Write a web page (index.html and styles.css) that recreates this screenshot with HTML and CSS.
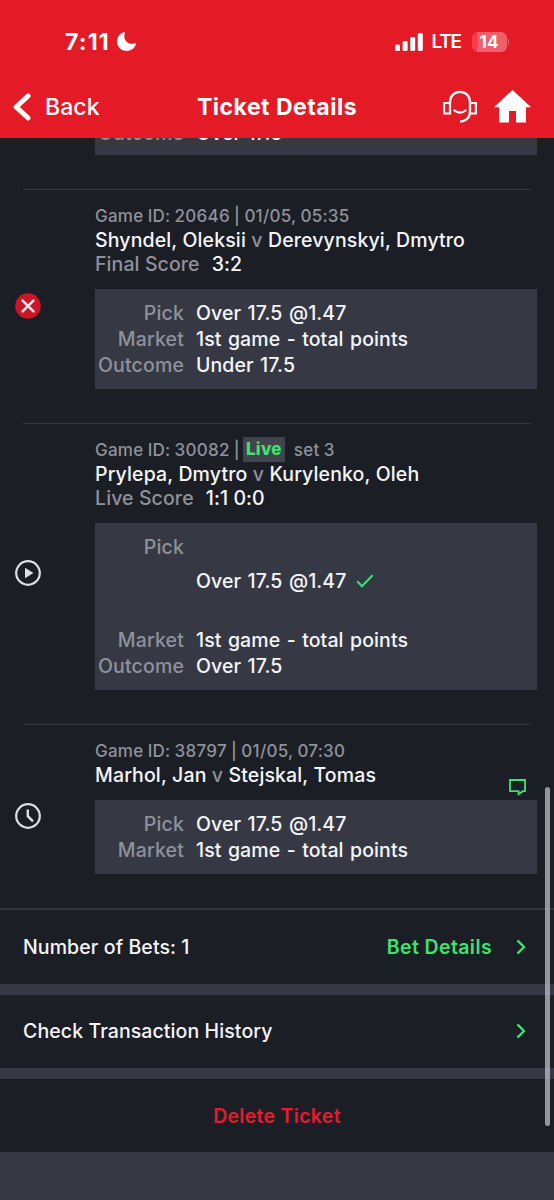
FILE: index.html
```html
<!DOCTYPE html>
<html lang="en">
<head>
  <meta charset="UTF-8">
  <meta name="viewport" content="width=device-width, initial-scale=1.0">
  <title>Ticket Details</title>
  <link rel="stylesheet" href="styles.css">
</head>
<body>
  <header class="header">
    <div class="status-bar">
      <div class="status-time">
        <span class="clock">7:11</span>
        <svg width="19" height="19" viewBox="0 0 19 19">
          <path d="M6.4 0.3C7.4 -0.2 8.2 0.5 7.8 1.5C5.6 7.4 11 13.6 17.4 11.4C18.5 11 19.3 11.7 18.8 12.8C17.2 16.6 13.8 19 9.7 19C4.3 19 0 14.8 0 9.5C0 5.4 2.5 1.8 6.4 0.3Z" fill="#fff"/>
        </svg>
      </div>
      <div class="status-right">
        <svg width="28" height="18" viewBox="0 0 28 18" fill="#fff">
          <rect x="0" y="11.5" width="5" height="6.5" rx="1.5"/>
          <rect x="7.6" y="8" width="5" height="10" rx="1.5"/>
          <rect x="15.2" y="4" width="5" height="14" rx="1.5"/>
          <rect x="22.8" y="0" width="5" height="18" rx="1.5"/>
        </svg>
        <span class="network">LTE</span>
        <span class="battery">14</span>
        <span class="battery-cap"></span>
      </div>
    </div>
    <nav class="nav-bar">
      <a class="back">
        <svg width="18" height="28" viewBox="0 0 18 28">
          <path d="M15 3L3.2 14L15 25" fill="none" stroke="#fff" stroke-width="5" stroke-linecap="round" stroke-linejoin="round"/>
        </svg>
        <span class="back-label">Back</span>
      </a>
      <h1>Ticket Details</h1>
      <div class="nav-icons">
        <svg width="34" height="34" viewBox="0 0 34 34" fill="none" stroke="#fff" stroke-width="2.2">
          <path d="M7 13H1.1V23.5H7Z"/>
          <path d="M27 13H32.9V23.5H27Z"/>
          <path d="M7 13V12C7 6 11.5 1.8 17 1.8S27 6 27 12V21.5C27 27.5 23 31.6 17 31.6"/>
          <path d="M11.5 20.5C14.5 23.3 19.5 23.3 22.5 20.5" stroke-linecap="round"/>
        </svg>
        <svg width="37" height="33" viewBox="0 0 37 33">
          <path d="M18.5 0L37 17.2H32V32.6H22V21H15V32.6H5V17.2H0Z" fill="#fff"/>
        </svg>
      </div>
    </nav>
  </header>

  <main class="content">
    <section class="bet bet-clipped">
      <div class="bet-icon"></div>
      <div class="bet-info">
        <dl class="pick-box">
          <dt>Outcome</dt><dd><span>Over 17.5</span></dd>
        </dl>
      </div>
    </section>

    <section class="bet">
      <div class="bet-icon">
        <svg width="26" height="26" viewBox="0 0 26 26">
          <circle cx="13" cy="13" r="12.8" fill="#c91526"/>
          <path d="M7.6 7.6L18.4 18.4M18.4 7.6L7.6 18.4" stroke="#fbe9ec" stroke-width="2.6" stroke-linecap="round"/>
        </svg>
      </div>
      <div class="bet-info">
        <div class="meta"><span>Game ID: 20646 | 01/05, 05:35</span></div>
        <div class="teams"><span>Shyndel, Oleksii <i>v</i> Derevynskyi, Dmytro</span></div>
        <div class="score"><span class="score-label">Final Score</span><span>3:2</span></div>
        <dl class="pick-box">
          <dt>Pick</dt><dd><span>Over 17.5 @1.47</span></dd>
          <dt>Market</dt><dd><span>1st game - total points</span></dd>
          <dt>Outcome</dt><dd><span>Under 17.5</span></dd>
        </dl>
      </div>
    </section>

    <section class="bet">
      <div class="bet-icon">
        <svg width="26" height="26" viewBox="0 0 26 26">
          <circle cx="13" cy="13" r="11.8" fill="none" stroke="#dddfe3" stroke-width="2.2"/>
          <path d="M10 7.8V18.2L18.4 13Z" fill="#dddfe3"/>
        </svg>
      </div>
      <div class="bet-info">
        <div class="meta"><span>Game ID: 30082 |</span><span class="live">Live</span><span>set 3</span></div>
        <div class="teams"><span>Prylepa, Dmytro <i>v</i> Kurylenko, Oleh</span></div>
        <div class="score"><span class="score-label">Live Score</span><span>1:1 0:0</span></div>
        <dl class="pick-box">
          <dt>Pick</dt>
          <dd class="pick-live">
            <span>Over 17.5 @1.47</span>
            <svg width="18" height="14" viewBox="0 0 18 14">
              <path d="M1.2 7.2L6 12.2L16.6 1.2" fill="none" stroke="#3ce36f" stroke-width="2"/>
            </svg>
          </dd>
          <dt>Market</dt><dd><span>1st game - total points</span></dd>
          <dt>Outcome</dt><dd><span>Over 17.5</span></dd>
        </dl>
      </div>
    </section>

    <section class="bet">
      <div class="bet-icon">
        <svg width="26" height="26" viewBox="0 0 26 26" fill="none" stroke="#dddfe3">
          <circle cx="13" cy="13" r="11.8" stroke-width="2.2"/>
          <path d="M12.8 6.5V13.2L18 18.4" stroke-width="2.4"/>
        </svg>
      </div>
      <div class="bet-info">
        <div class="meta"><span>Game ID: 38797 | 01/05, 07:30</span></div>
        <div class="teams">
          <span>Marhol, Jan <i>v</i> Stejskal, Tomas</span>
          <svg class="comment" width="18" height="17" viewBox="0 0 18 17">
            <path d="M1 1H16V12.2H13.8L9.6 15.2V12.2H1Z" fill="none" stroke="#3ce36f" stroke-width="1.8"/>
          </svg>
        </div>
        <dl class="pick-box">
          <dt>Pick</dt><dd><span>Over 17.5 @1.47</span></dd>
          <dt>Market</dt><dd><span>1st game - total points</span></dd>
        </dl>
      </div>
    </section>

    <div class="actions">
      <a class="action">
        <span class="action-label">Number of Bets: 1</span>
        <span class="action-link">Bet Details</span>
        <svg width="10" height="16" viewBox="0 0 10 16">
          <path d="M1.4 1.4L8 8L1.4 14.6" fill="none" stroke="#3ce36f" stroke-width="2.3"/>
        </svg>
      </a>
      <a class="action">
        <span class="action-label">Check Transaction History</span>
        <svg width="10" height="16" viewBox="0 0 10 16">
          <path d="M1.4 1.4L8 8L1.4 14.6" fill="none" stroke="#3ce36f" stroke-width="2.3"/>
        </svg>
      </a>
      <a class="action delete"><span>Delete Ticket</span></a>
    </div>
  </main>
  <div class="scrollbar"></div>
</body>
</html>
```

FILE: styles.css
```css
* {
  box-sizing: border-box;
}

body {
  position: relative;
  height: 1200px;
  margin: 0;
  overflow: hidden;
  background: #363944;
  color: #f5f6fa;
  font-family: Inter, "Liberation Sans", sans-serif;
  font-size: 19.5px;
  font-weight: 500;
  letter-spacing: 0.1px;
}

svg {
  display: block;
  flex: none;
}

.header {
  height: 138px;
  background: #e51a27;
  color: #fff;
}

.status-bar {
  display: flex;
  justify-content: space-between;
  align-items: center;
  height: 75px;
  padding: 8px 45px 0 65px;
}

.status-time,
.status-right {
  display: flex;
  align-items: center;
}

.clock {
  width: 52px;
  font-size: 23px;
  font-weight: 700;
  letter-spacing: 1.2px;
}

.network {
  width: 30px;
  margin: 0 10px 0 9px;
  font-size: 19px;
  font-weight: 600;
  letter-spacing: -1.3px;
}

.battery {
  width: 35px;
  height: 20px;
  border-radius: 6px;
  background: linear-gradient(90deg, #ff3b47 14%, #f0606b 14%);
  font-size: 17px;
  font-weight: 700;
  line-height: 20px;
  text-align: center;
}

.battery-cap {
  width: 1.5px;
  height: 6px;
  margin-left: 1px;
  border-radius: 0 2px 2px 0;
  background: #f0606b;
}

.nav-bar {
  display: grid;
  grid-template-columns: 1fr auto 1fr;
  align-items: center;
  height: 63px;
  padding: 0 23px;
}

.back {
  display: flex;
  align-items: center;
  gap: 14px;
  margin-left: -10px;
  font-size: 23px;
}

h1 {
  margin: 0;
  font-size: 23px;
  font-weight: 700;
  letter-spacing: 0.5px;
}

.nav-icons {
  display: flex;
  justify-content: flex-end;
  align-items: center;
  gap: 17px;
}

.content {
  height: 1014px;
  background: #1c1e26;
  overflow: hidden;
}

.bet {
  display: flex;
  align-items: center;
  margin: 0 23px;
  padding: 14px 0 34px;
  border-top: 1px solid #363840;
}

/* scrolled under the header, only its lower edge shows */
.bet-clipped {
  margin-top: -57px;
  padding-top: 13px;
  border-top: none;
}

.bet-icon {
  flex: none;
  width: 72px;
  margin-top: 18px;
  margin-left: -8px;
}

.bet-info {
  flex: 1;
  margin-left: 8px;
}

.meta {
  display: flex;
  align-items: center;
  height: 24px;
  color: #8f919b;
  font-size: 17px;
  letter-spacing: 0.25px;
  word-spacing: -0.6px;
}

.live {
  height: 25px;
  margin: -1px 9px 0 3px;
  padding: 0 3px;
  background: #41444c;
  color: #3ce36f;
  font-weight: 800;
  line-height: 25px;
}

.teams {
  display: flex;
  height: 24px;
  line-height: 24px;
  letter-spacing: 0.13px;
}

.teams i {
  color: #8f919b;
  font-style: normal;
}

.comment {
  margin: 16px 4px 0 auto;
}

.score {
  display: flex;
  gap: 12px;
  height: 24px;
  line-height: 24px;
}

.score-label,
.pick-box dt {
  color: #8f919b;
}

.pick-box {
  display: grid;
  grid-template-columns: 89px 1fr;
  column-gap: 12px;
  margin: 13px -6px 0 0;
  padding: 11px 0;
  background: #363944;
  line-height: 26px;
}

.bet-clipped .pick-box {
  padding: 13px 0 9px;
}

.pick-box dt {
  letter-spacing: 0.15px;
  text-align: right;
}

.pick-box dd {
  margin: 0;
  word-spacing: 1.1px;
}

.pick-box .pick-live {
  display: flex;
  align-items: center;
  gap: 9px;
  height: 93px;
}

.actions {
  display: flex;
  flex-direction: column;
  gap: 11px;
  border-top: 2px solid #31343d;
  background: #363944;
}

.action {
  display: flex;
  align-items: center;
  height: 73.5px;
  padding: 0 28px 0 23px;
  background: #1c1e26;
}

.action-label {
  margin-right: auto;
}

.action-link {
  margin-right: 24px;
  color: #3ce36f;
  font-weight: 600;
  letter-spacing: 0.4px;
}

.delete {
  justify-content: center;
  padding: 0;
  color: #e51a2f;
  font-weight: 600;
  letter-spacing: 0.3px;
}

.scrollbar {
  position: absolute;
  top: 787px;
  right: 4px;
  width: 5px;
  height: 339px;
  border-radius: 3px;
  background: rgba(190, 190, 196, 0.75);
}
```
